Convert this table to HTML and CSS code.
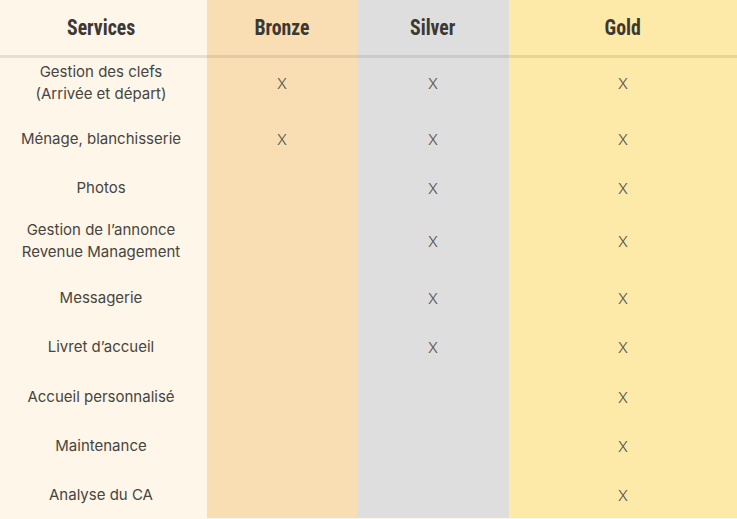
FILE: index.html
```html
<!DOCTYPE html>
<html lang="fr">
<head>
<meta charset="utf-8">
<title>Services</title>
<link rel="stylesheet" href="styles.css">
</head>
<body>
<div class="table">
  <div class="cell head col-services"><span class="hd">Services</span></div>
  <div class="cell head col-bronze"><span class="hd">Bronze</span></div>
  <div class="cell head col-silver"><span class="hd">Silver</span></div>
  <div class="cell head col-gold"><span class="hd">Gold</span></div>

  <div class="cell col-services label">Gestion des clefs<br>(Arrivée et départ)</div>
  <div class="cell col-bronze mark">X</div>
  <div class="cell col-silver mark">X</div>
  <div class="cell col-gold mark">X</div>

  <div class="cell col-services label">Ménage, blanchisserie</div>
  <div class="cell col-bronze mark">X</div>
  <div class="cell col-silver mark">X</div>
  <div class="cell col-gold mark">X</div>

  <div class="cell col-services label">Photos</div>
  <div class="cell col-bronze mark"></div>
  <div class="cell col-silver mark">X</div>
  <div class="cell col-gold mark">X</div>

  <div class="cell col-services label">Gestion de l’annonce<br>Revenue Management</div>
  <div class="cell col-bronze mark"></div>
  <div class="cell col-silver mark">X</div>
  <div class="cell col-gold mark">X</div>

  <div class="cell col-services label">Messagerie</div>
  <div class="cell col-bronze mark"></div>
  <div class="cell col-silver mark">X</div>
  <div class="cell col-gold mark">X</div>

  <div class="cell col-services label">Livret d’accueil</div>
  <div class="cell col-bronze mark"></div>
  <div class="cell col-silver mark">X</div>
  <div class="cell col-gold mark">X</div>

  <div class="cell col-services label">Accueil personnalisé</div>
  <div class="cell col-bronze mark"></div>
  <div class="cell col-silver mark"></div>
  <div class="cell col-gold mark">X</div>

  <div class="cell col-services label">Maintenance</div>
  <div class="cell col-bronze mark"></div>
  <div class="cell col-silver mark"></div>
  <div class="cell col-gold mark">X</div>

  <div class="cell col-services label">Analyse du CA</div>
  <div class="cell col-bronze mark"></div>
  <div class="cell col-silver mark"></div>
  <div class="cell col-gold mark">X</div>
</div>
</body>
</html>
```
FILE: styles.css
```css
html, body {
  margin: 0;
  padding: 0;
}
body {
  background: #fdf6e9;
  font-family: "Inter", "Noto Sans", sans-serif;
  color: #444240;
}
.table {
  display: grid;
  grid-template-columns: 207px 150px 152px 228px;
  grid-template-rows: 58px 50px 62px 36px 70px 44px 54px 46px 52px 46px;
  width: 737px;
  height: 519px;
  overflow: hidden;
}
.cell {
  display: flex;
  align-items: center;
  justify-content: center;
  text-align: center;
}
.col-services { background: #fdf6e9; padding-right: 5px; }
.col-bronze { background: #f9deb3; }
.col-silver { background: #dedede; }
.col-gold { background: #fdeaa8; }
.head {
  border-bottom: 3px solid rgba(0, 0, 0, 0.09);
  padding-bottom: 1px;
}
.hd {
  font-family: "Roboto Condensed", "Roboto", sans-serif;
  font-weight: 700;
  font-size: 21.5px;
  color: #3c3833;
  display: inline-block;
  transform: scaleX(0.92);
}
.label {
  font-size: 15px;
  line-height: 22.5px;
  color: #47453f;
}
.mark {
  font-size: 15px;
  font-weight: 300;
  color: #54524e;
}
```
